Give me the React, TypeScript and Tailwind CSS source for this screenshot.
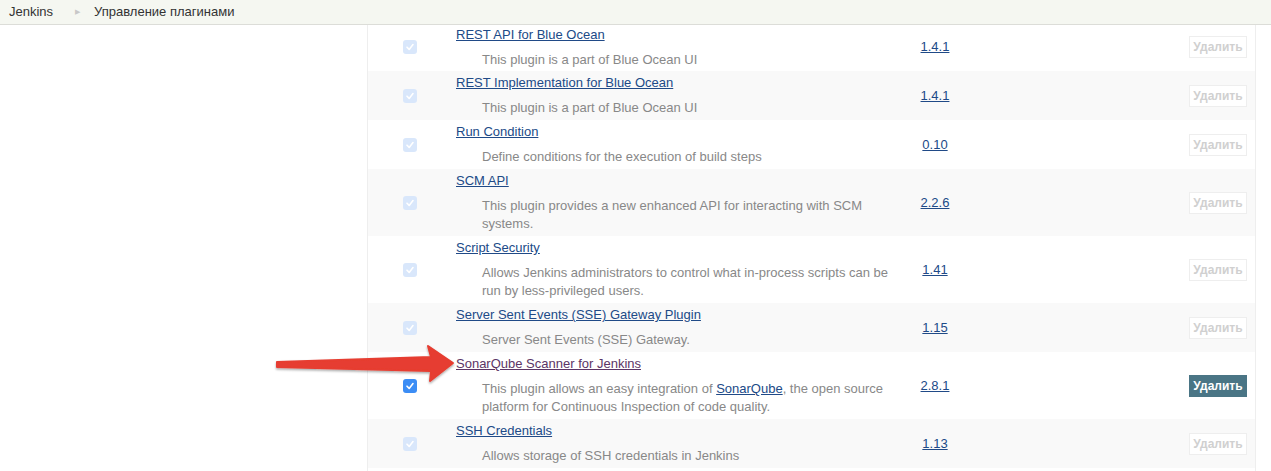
type Plugin = {
  name: string;
  desc: React.ReactNode;
  version: string;
  active?: boolean;
};

const plugins: Plugin[] = [
  { name: 'REST API for Blue Ocean', desc: 'This plugin is a part of Blue Ocean UI', version: '1.4.1' },
  { name: 'REST Implementation for Blue Ocean', desc: 'This plugin is a part of Blue Ocean UI', version: '1.4.1' },
  { name: 'Run Condition', desc: 'Define conditions for the execution of build steps', version: '0.10' },
  { name: 'SCM API', desc: 'This plugin provides a new enhanced API for interacting with SCM systems.', version: '2.2.6' },
  {
    name: 'Script Security',
    desc: 'Allows Jenkins administrators to control what in-process scripts can be run by less-privileged users.',
    version: '1.41',
  },
  { name: 'Server Sent Events (SSE) Gateway Plugin', desc: 'Server Sent Events (SSE) Gateway.', version: '1.15' },
  {
    name: 'SonarQube Scanner for Jenkins',
    desc: (
      <>
        This plugin allows an easy integration of <a className="text-[#204a87] underline">SonarQube</a>, the open
        source platform for Continuous Inspection of code quality.
      </>
    ),
    version: '2.8.1',
    active: true,
  },
  { name: 'SSH Credentials', desc: 'Allows storage of SSH credentials in Jenkins', version: '1.13' },
];

function Check({ active }: { active?: boolean }) {
  return (
    <div
      className={`flex h-[14px] w-[14px] items-center justify-center rounded-[3px] ${
        active ? 'bg-[#3b8df5]' : 'bg-[#d9e7fb]'
      }`}
    >
      <svg width="10" height="10" viewBox="0 0 10 10">
        <path d="M2 5.2 L4.2 7.4 L8 2.6" fill="none" stroke="white" strokeWidth="1.6" strokeLinecap="round" strokeLinejoin="round" />
      </svg>
    </div>
  );
}

function Row({ p, i }: { p: Plugin; i: number }) {
  return (
    <div className={`flex ${i % 2 ? 'bg-[#f9f9f9]' : 'bg-white'} ${i === 0 ? '-mt-[2px]' : ''}`}>
      <div className="flex w-[84px] shrink-0 items-center justify-center">
        <Check active={p.active} />
      </div>
      <div className={`w-[448px] shrink-0 pl-1 pt-[3px] ${i === 0 ? 'pb-[2px]' : 'pb-[3px]'}`}>
        <div className="leading-[18px]">
          <a className={`underline ${p.active ? 'text-[#5c3566]' : 'text-[#204a87]'}`}>{p.name}</a>
        </div>
        <div className="mt-[7px] ml-[26px] leading-[18px] text-[#888]">{p.desc}</div>
      </div>
      <div className="flex w-[70px] shrink-0 items-center justify-center">
        <a className="text-[#204a87] underline">{p.version}</a>
      </div>
      <div className="flex flex-1 items-center justify-end pr-2">
        {p.active ? (
          <button className="h-[22px] w-[58px] bg-[#4a7585] text-[12px] font-bold text-white">Удалить</button>
        ) : (
          <button className="h-[22px] w-[58px] border border-[#eee] bg-white text-[12px] font-bold text-[#d0d0d0]">
            Удалить
          </button>
        )}
      </div>
    </div>
  );
}

export default function App() {
  return (
    <div className="relative h-[471px] w-full overflow-hidden bg-white font-['Liberation_Sans',Arial,sans-serif] text-[13px] text-[#333]">
      {/* breadcrumbs */}
      <div className="relative z-10 flex h-[25px] items-center border-b border-[#dcddd8] bg-[#f5f7f1] pl-[9px]">
        <span>Jenkins</span>
        <span className="ml-[22px] mr-[14px] text-[7px] text-[#c8c8c8]">▶</span>
        <span>Управление плагинами</span>
      </div>

      <div className="flex">
        <div className="w-[367px] shrink-0" />
        <div className="w-[889px] shrink-0 border-x border-[#eee]">
          {plugins.map((p, i) => (
            <Row key={p.name} p={p} i={i} />
          ))}
          <div className="h-10 bg-white" />
        </div>
      </div>

      {/* red arrow */}
      <svg className="absolute left-[270px] top-[340px]" width="200" height="50" viewBox="0 0 200 50">
        <defs>
          <filter id="sh" x="-10%" y="-20%" width="120%" height="160%">
            <feDropShadow dx="0" dy="1.5" stdDeviation="1" floodColor="#000" floodOpacity="0.35" />
          </filter>
        </defs>
        <polygon
          points="7,22 161,17 158,6 183,23 160,41 161,31 7,27"
          fill="#e63d30"
          stroke="#e63d30"
          strokeWidth="2"
          strokeLinejoin="round"
          filter="url(#sh)"
        />
      </svg>
    </div>
  );
}
